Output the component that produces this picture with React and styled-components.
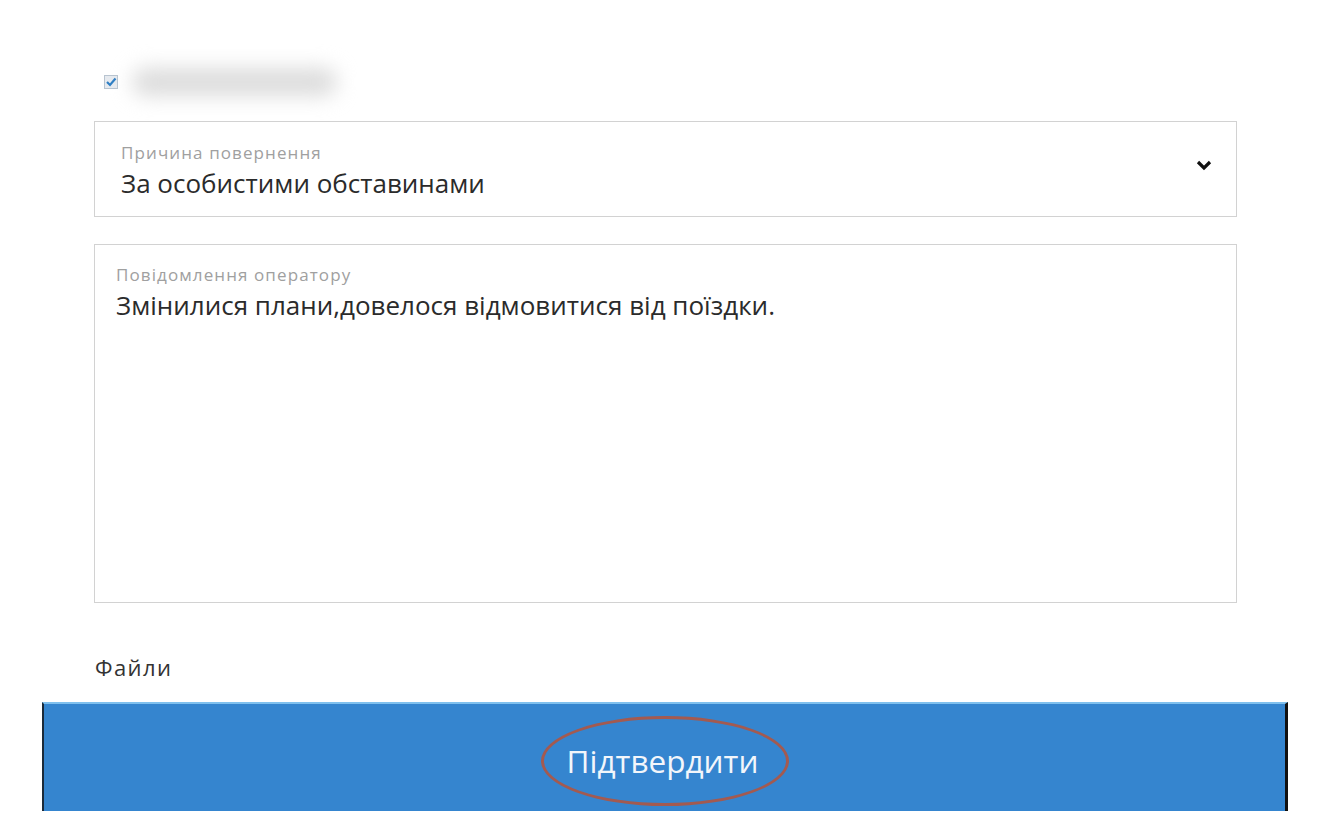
import styled, { createGlobalStyle } from 'styled-components';

const GlobalStyle = createGlobalStyle`
  body {
    margin: 0;
    background: #fff;
    font-family: "Open Sans", "Noto Sans", sans-serif;
  }
`;

const Page = styled.div`
  width: 1322px;
  height: 830px;
  padding-top: 72px;
  box-sizing: border-box;
  overflow: hidden;
`;

const Form = styled.div`
  margin: 0 85px 0 94px;
  display: flex;
  flex-direction: column;
`;

const CheckRow = styled.div`
  display: flex;
  align-items: center;
  gap: 14px;
  height: 20px;
  margin-left: 10px;
  margin-bottom: 29px;
`;

const Check = styled.span`
  width: 14px;
  height: 14px;
  box-sizing: border-box;
  border: 1px solid #b8c4d0;
  background: #e6eaef;
  display: flex;
  align-items: center;
  justify-content: center;
`;

const Blurred = styled.span`
  width: 205px;
  height: 28px;
  border-radius: 14px;
  background: #dcdcdc;
  filter: blur(10px);
`;

const Field = styled.div`
  position: relative;
  border: 1px solid #d2d2d2;
  box-sizing: border-box;
  height: ${p => p.$height}px;
  padding: ${p => p.$pad};
  margin-bottom: ${p => p.$gap}px;
`;

const Label = styled.div`
  font-size: 17px;
  line-height: 22px;
  letter-spacing: 1.1px;
  color: #a0a0a0;
`;

const Value = styled.div`
  font-size: 26px;
  line-height: 36px;
  color: #2b2b2b;
  margin-top: ${p => p.$top}px;
`;

const Chevron = styled.svg`
  position: absolute;
  right: 23px;
  top: 37px;
`;

const FilesLabel = styled.div`
  margin: 0 0 0 1px;
  font-size: 22px;
  line-height: 28px;
  letter-spacing: 1.4px;
  color: #333;
`;

const Submit = styled.div`
  margin: 21px 34px 0 42px;
  height: 109px;
  background: #3585cf;
  border-top: 2px solid #7fc0ee;
  border-left: 2px solid #1a2a3a;
  border-right: 3px solid #111;
  box-sizing: border-box;
  display: flex;
  align-items: center;
  justify-content: center;
`;

const Ring = styled.div`
  width: 248px;
  height: 90px;
  border: 3px solid #a35a50;
  border-radius: 50%;
  box-sizing: border-box;
  display: flex;
  align-items: center;
  justify-content: center;
  margin-top: 6px;
`;

const SubmitText = styled.span`
  font-size: 31.5px;
  color: #f2f6fb;
  margin-left: -4px;
`;

export default function App() {
  return (
    <Page>
      <GlobalStyle />
      <Form>
        <CheckRow>
          <Check>
            <svg width="12" height="12" viewBox="0 0 12 12">
              <path d="M2 6 L5 9 L10.5 2.5" fill="none" stroke="#2f7fc4" strokeWidth="2.2" />
            </svg>
          </Check>
          <Blurred />
        </CheckRow>
        <Field $height={96} $pad="20px 26px" $gap={27}>
          <Label>Причина повернення</Label>
          <Value $top={1}>За особистими обставинами</Value>
          <Chevron width="18" height="12" viewBox="0 0 18 12">
            <path d="M3 3 L9 9 L15 3" fill="none" stroke="#111" strokeWidth="3.2" />
          </Chevron>
        </Field>
        <Field $height={359} $pad="19px 21px" $gap={50}>
          <Label>Повідомлення оператору</Label>
          <Value $top={1}>Змінилися плани,довелося відмовитися від поїздки.</Value>
        </Field>
        <FilesLabel>Файли</FilesLabel>
      </Form>
      <Submit>
        <Ring>
          <SubmitText>Підтвердити</SubmitText>
        </Ring>
      </Submit>
    </Page>
  );
}
